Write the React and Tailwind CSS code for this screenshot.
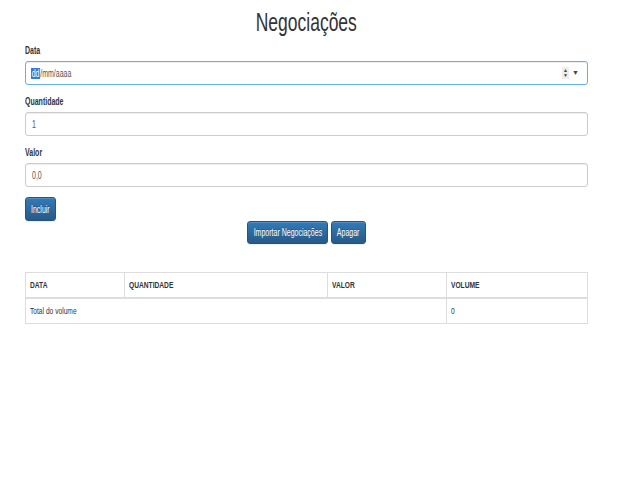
import React from "react";

// the reference text is condensed, so every text run is squeezed horizontally
function T({ children, center = false }) {
  return (
    <span className={"inline-block whitespace-nowrap scale-x-[0.7] " + (center ? "origin-center" : "origin-left")}>
      {children}
    </span>
  );
}

const columns = [
  { key: "data", label: "DATA", width: "w-[99px]" },
  { key: "quantidade", label: "QUANTIDADE", width: "w-[203px]" },
  { key: "valor", label: "VALOR", width: "w-[119px]" },
  { key: "volume", label: "VOLUME", width: "" },
];

function Field({ label, children }) {
  return (
    <div className="mb-[10px]">
      <label className="block font-bold text-[10px] leading-[14px] mb-[3px]">
        <T>{label}</T>
      </label>
      {children}
    </div>
  );
}

function Button({ children, className = "" }) {
  return (
    <button
      className={
        "h-[23px] flex items-center justify-center rounded-[3px] border border-[#245580] bg-gradient-to-b from-[#337ab7] to-[#265a88] text-white text-[10px] [text-shadow:0_-1px_0_rgba(0,0,0,0.2)] shadow-[inset_0_1px_0_rgba(255,255,255,0.15),0_1px_1px_rgba(0,0,0,0.075)] " +
        className
      }
    >
      <T center>{children}</T>
    </button>
  );
}

const inputBase =
  "h-[24px] flex items-center rounded-[3px] border text-[10px] text-[#555] shadow-[inset_0_1px_1px_rgba(0,0,0,0.075)]";

export default function App() {
  return (
    <div className="min-h-[480px] bg-white text-[#333] font-['Liberation_Sans',Arial,sans-serif]">
      <div className="ml-[25px] w-[563px]">
        <h1 className="pt-[10px] mb-[9px] text-[25px] leading-[25px] text-center">
          <T center>Negociações</T>
        </h1>

        <Field label="Data">
          <div className={inputBase + " pl-[5px] pr-[8px] border-[#66afe9] shadow-[inset_0_1px_1px_rgba(0,0,0,0.075),0_0_5px_rgba(102,175,233,0.6)]"}>
            <T>
              <span className="bg-[#3a78d8] text-white px-[1px]">dd</span>
              <span>/mm/aaaa</span>
            </T>
            <span className="ml-auto flex items-center gap-[3px] text-[#444]">
              <span className="flex flex-col items-center justify-center bg-[#eee] h-[12px] w-[7px] text-[5px] leading-[5px]">
                <span>▲</span>
                <span>▼</span>
              </span>
              <span className="text-[7px]">▼</span>
            </span>
          </div>
        </Field>

        <Field label="Quantidade">
          <div className={inputBase + " px-[6px] border-[#ccc]"}>
            <T>1</T>
          </div>
        </Field>

        <Field label="Valor">
          <div className={inputBase + " px-[6px] border-[#ccc]"}>
            <T>0,0</T>
          </div>
        </Field>

        <Button className="mt-[2px] w-[31px] h-[24px]">Incluir</Button>

        <div className="flex justify-center gap-[3px]">
          <Button className="w-[81px]">Importar Negociações</Button>
          <Button className="w-[35px]">Apagar</Button>
        </div>

        <div className="mt-[28px] border border-[#ddd] text-[9.5px]">
          <div className="flex h-[26px] border-b-2 border-[#ddd] font-bold">
            {columns.map((c, i) => (
              <div
                key={c.key}
                className={
                  "flex items-center px-[4px] " +
                  (c.width || "flex-1") +
                  (i < columns.length - 1 ? " border-r border-[#ddd]" : "")
                }
              >
                <T>{c.label}</T>
              </div>
            ))}
          </div>
          <div className="flex h-[24px]">
            <div className="flex items-center px-[4px] w-[421px] border-r border-[#ddd]">
              <T>Total do volume</T>
            </div>
            <div className="flex items-center px-[4px] flex-1">
              <T>0</T>
            </div>
          </div>
        </div>
      </div>
    </div>
  );
}
